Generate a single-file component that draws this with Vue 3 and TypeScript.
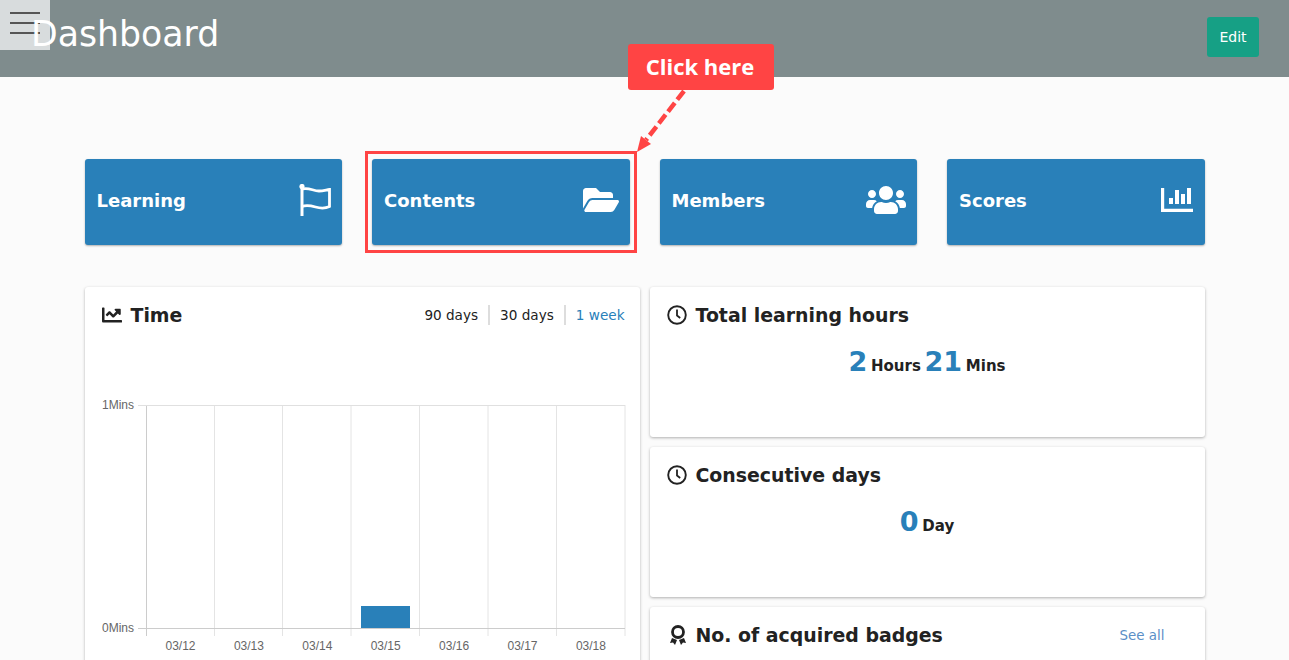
<script setup lang="ts">
const cards = ["Learning", "Contents", "Members", "Scores"];
const gridX = [146.5, 214.5, 282.5, 351, 419.5, 488, 556.5, 625];
const dates = ["03/12", "03/13", "03/14", "03/15", "03/16", "03/17", "03/18"];
</script>

<template>
  <div class="page">
    <header class="top">
      <button class="burger"><span></span><span></span><span></span></button>
      <h1 class="title">Dashboard</h1>
      <button class="edit">Edit</button>
    </header>

    <main class="content">
      <div class="cards">
        <a v-for="card in cards" :key="card" class="card">
          <span>{{ card }}</span>
          <svg v-if="card === 'Learning'" class="icon" width="32" height="32" viewBox="0 0 32 32">
            <circle cx="3" cy="2.500" r="2.600" fill="#fff" />
            <path d="M3 2v30" stroke="#fff" stroke-width="3" fill="none" />
            <path d="M3 5c7-2 11 2 17 2 4 0 7-1 10.500-1.500v17c-4 2-9 2-14 .5-5-1.500-10-2-13.500-.5" stroke="#fff" stroke-width="2.800" fill="none" />
          </svg>
          <svg v-else-if="card === 'Contents'" class="icon folder" width="36" height="32" viewBox="0 0 576 512">
            <path fill="#fff" d="M572.694 292.093L500.27 416.248A63.997 63.997 0 0 1 444.989 448H45.025c-18.523 0-30.064-20.093-20.731-36.093l72.424-124.155A64 64 0 0 1 152 256h399.964c18.523 0 30.064 20.093 20.73 36.093zM152 224h328v-48c0-26.51-21.49-48-48-48H272l-64-64H48C21.49 64 0 85.49 0 112v278.046l69.077-118.418C86.214 242.25 117.989 224 152 224z" />
          </svg>
          <svg v-else-if="card === 'Members'" class="icon" width="40" height="32" viewBox="0 0 640 512">
            <path fill="#fff" d="M96 224c35.3 0 64-28.700 64-64s-28.700-64-64-64-64 28.700-64 64 28.700 64 64 64zm448 0c35.300 0 64-28.700 64-64s-28.700-64-64-64-64 28.700-64 64 28.700 64 64 64zm32 32h-64c-17.600 0-33.500 7.100-45.100 18.600 40.300 22.100 68.900 62 75.100 109.400h66c17.700 0 32-14.300 32-32v-32c0-35.300-28.700-64-64-64zm-256 0c61.900 0 112-50.100 112-112S381.900 32 320 32 208 82.100 208 144s50.100 112 112 112zm76.800 32h-8.300c-20.800 10-43.900 16-68.500 16s-47.600-6-68.500-16h-8.300C179.600 288 128 339.600 128 403.200V432c0 26.500 21.500 48 48 48h288c26.500 0 48-21.500 48-48v-28.800c0-63.600-51.600-115.200-115.200-115.200zm-223.700-13.400C161.500 263.100 145.600 256 128 256H64c-35.300 0-64 28.700-64 64v32c0 17.700 14.300 32 32 32h65.900c6.300-47.400 34.900-87.300 75.200-109.400z" />
          </svg>
          <svg v-else class="icon scores" width="32" height="24" viewBox="0 0 32 24">
            <path d="M1.600 0v22.300H32" stroke="#fff" stroke-width="3.200" fill="none" />
            <rect x="8" y="10" width="4" height="6" fill="#fff" />
            <rect x="14" y="2" width="4" height="14" fill="#fff" />
            <rect x="20" y="6" width="4" height="10" fill="#fff" />
            <rect x="26" y="0" width="4" height="16" fill="#fff" />
          </svg>
        </a>
      </div>

      <div class="panels">
        <section class="panel chart-panel">
          <div class="panel-head">
            <h2>
              <svg class="head-icon" width="20" height="20" viewBox="0 0 512 512">
                <path fill="#222" d="M496 384H64V80c0-8.840-7.160-16-16-16H16C7.160 64 0 71.160 0 80v336c0 17.670 14.330 32 32 32h464c8.840 0 16-7.160 16-16v-32c0-8.840-7.160-16-16-16zM464 96H345.940c-21.380 0-32.090 25.850-16.970 40.970l32.400 32.400L288 242.750l-73.370-73.370c-12.500-12.500-32.760-12.500-45.250 0l-68.690 68.690c-6.250 6.250-6.250 16.380 0 22.630l22.620 22.620c6.250 6.250 16.380 6.250 22.630 0L192 237.250l73.370 73.370c12.500 12.500 32.760 12.500 45.250 0l96-96 32.400 32.400c15.120 15.120 40.970 4.410 40.970-16.970V112c0-8.840-7.160-16-16-16z" />
              </svg>
              Time
            </h2>
            <div class="ranges">
              <a>90 days</a>
              <a>30 days</a>
              <a class="active">1 week</a>
            </div>
          </div>
          <svg class="chart" width="555" height="300" viewBox="85 360 555 300">
            <line v-for="x in gridX" :key="x" :x1="x" :x2="x" y1="405" y2="636" stroke="#e4e4e4" />
            <line x1="146.500" x2="146.500" y1="405" y2="636" stroke="#ccc" />
            <line x1="138" x2="625" y1="405.500" y2="405.500" stroke="#e0e0e0" />
            <rect x="361" y="606" width="49" height="22" fill="#2980b9" />
            <line x1="138" x2="625" y1="628.500" y2="628.500" stroke="#ccc" />
            <text class="tick" x="134" y="409" text-anchor="end">1Mins</text>
            <text class="tick" x="134" y="632" text-anchor="end">0Mins</text>
            <text v-for="(d, i) in dates" :key="d" class="tick" :x="180.500 + i * 68.400" y="650" text-anchor="middle">{{ d }}</text>
          </svg>
        </section>

        <div class="side">
          <section class="panel stat">
            <h2>
              <svg class="head-icon clock" width="20" height="20" viewBox="0 0 20 20">
                <circle cx="10" cy="10" r="8.800" fill="none" stroke="#222" stroke-width="1.900" />
                <path d="M10 4.500V10.500l3.200 2.500" fill="none" stroke="#222" stroke-width="1.800" />
              </svg>
              Total learning hours
            </h2>
            <p class="value"><b>2</b> Hours <b>21</b> Mins</p>
          </section>
          <section class="panel stat">
            <h2>
              <svg class="head-icon clock" width="20" height="20" viewBox="0 0 20 20">
                <circle cx="10" cy="10" r="8.800" fill="none" stroke="#222" stroke-width="1.900" />
                <path d="M10 4.500V10.500l3.200 2.500" fill="none" stroke="#222" stroke-width="1.800" />
              </svg>
              Consecutive days
            </h2>
            <p class="value"><b>0</b> Day</p>
          </section>
          <section class="panel stat badges">
            <div class="panel-head">
              <h2>
                <svg class="head-icon badge" width="16" height="21" viewBox="0 0 16 21">
                  <circle cx="8" cy="7" r="5.500" fill="none" stroke="#222" stroke-width="2.800" />
                  <path d="M2 13l-2 5 3-.5 2 2.500 2-5zM14 13l2 5-3-.5-2 2.500-2-5z" fill="#222" />
                </svg>
                No. of acquired badges
              </h2>
              <a class="see-all">See all</a>
            </div>
          </section>
        </div>
      </div>
    </main>

    <div class="callout">Click here</div>
    <div class="highlight"></div>
    <svg class="arrow" width="60" height="66" viewBox="0 0 60 66">
      <path d="M52 1L14 50" stroke="#ff4444" stroke-width="4.500" stroke-dasharray="11 4" fill="none" />
      <path d="M5 62L9 46 19 54Z" fill="#ff4444" />
    </svg>
  </div>
</template>

<style scoped>
.page {
  position: relative;
  height: 660px;
  overflow: hidden;
  background: #fbfbfb;
  color: #222;
  font-family: "DejaVu Sans", Verdana, sans-serif;
}

.page * {
  box-sizing: border-box;
}

.top {
  display: flex;
  align-items: flex-start;
  justify-content: space-between;
  height: 77px;
  background: #7f8c8d;
}

.burger {
  display: flex;
  flex-direction: column;
  gap: 8px;
  flex: none;
  width: 50px;
  height: 50px;
  padding: 12px 10px;
  border: 0;
  background: #d8dcdd;
}

.burger span {
  display: block;
  flex: none;
  width: 30px;
  height: 2px;
  background: #555;
}

.title {
  flex: 1;
  margin: 11px 0 0 -19px;
  color: #fff;
  font-size: 34.700px;
  font-weight: 400;
  line-height: 46px;
}

.edit {
  width: 52px;
  height: 40px;
  margin: 17px 30px 0 0;
  border: 0;
  border-radius: 3px;
  background: #16a085;
  color: #fff;
  font-family: inherit;
  font-size: 14px;
}

.content {
  width: 1120px;
  margin: 0 auto;
  padding: 82px 0 0;
}

.cards {
  display: grid;
  grid-template-columns: repeat(4, 1fr);
  gap: 30px;
}

.card {
  display: flex;
  align-items: center;
  justify-content: space-between;
  height: 86px;
  padding: 0 12px 4px;
  border-radius: 3px;
  background: #2980b9;
  box-shadow: 0 1px 2px rgba(0, 0, 0, 0.3);
  color: #fff;
  font-size: 18px;
  font-weight: 700;
}

.icon {
  margin-right: -1px;
}

.scores {
  margin-right: 0;
}

.panels {
  display: grid;
  grid-template-columns: 555px 555px;
  gap: 10px;
  margin-top: 42px;
}

.panel {
  border-radius: 3px;
  background: #fff;
  box-shadow: 0 1px 3px rgba(0, 0, 0, 0.3);
}

.chart-panel {
  position: relative;
  height: 400px;
  padding: 15px 15px 0 17px;
}

.panel-head {
  display: flex;
  align-items: center;
  justify-content: space-between;
}

h2 {
  display: flex;
  align-items: center;
  gap: 9px;
  margin: 0;
  color: #222;
  font-size: 18.900px;
  font-weight: 600;
  line-height: 26px;
}

.head-icon {
  flex: none;
}

.badge {
  margin: 0 1px 0 3px;
}

.ranges {
  display: flex;
  font-size: 13.600px;
}

.ranges a {
  padding: 0 10px;
  line-height: 20px;
  border-left: 2px solid #ddd;
}

.ranges a:first-child {
  border-left: 0;
}

.ranges a:last-child {
  padding-right: 0;
}

.active {
  color: #2980b9;
}

.chart {
  position: absolute;
  top: 73px;
  left: 0;
}

.tick {
  fill: #666;
  font-family: "Liberation Sans", Arial, sans-serif;
  font-size: 12px;
}

.side {
  display: flex;
  flex-direction: column;
  gap: 10px;
}

.stat {
  height: 150px;
  padding: 15px 17px 0;
}

.value {
  margin: 15px 0 0;
  font-size: 15px;
  font-weight: 600;
  line-height: 38px;
  text-align: center;
  word-spacing: -1.500px;
}

.value b {
  color: #2980b9;
  font-size: 27px;
  font-weight: 700;
}

.see-all {
  margin-right: 23px;
  color: #5b8fc7;
  font-size: 13.400px;
}

.callout {
  position: absolute;
  top: 44px;
  left: 628px;
  width: 146px;
  height: 46px;
  padding-right: 2px;
  border-radius: 3px;
  background: #ff4444;
  color: #fff;
  font-family: "Open Sans", sans-serif;
  font-size: 22px;
  font-weight: 700;
  line-height: 44px;
  text-align: center;
}

.highlight {
  position: absolute;
  top: 151px;
  left: 365px;
  width: 272px;
  height: 102px;
  border: 3px solid #ff4444;
}

.arrow {
  position: absolute;
  top: 90px;
  left: 632px;
}
</style>

<style>
html,
body {
  overflow: hidden;
}
</style>
